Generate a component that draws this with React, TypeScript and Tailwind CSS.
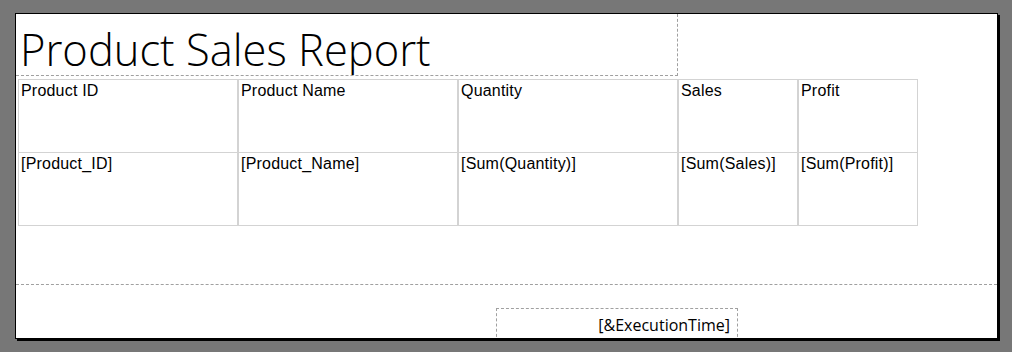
import React from "react";

const cols = [
  { w: "w-[220px]", h: "Product ID", d: "[Product_ID]" },
  { w: "w-[220px]", h: "Product Name", d: "[Product_Name]" },
  { w: "w-[220px]", h: "Quantity", d: "[Sum(Quantity)]" },
  { w: "w-[120px]", h: "Sales", d: "[Sum(Sales)]" },
  { w: "w-[120px]", h: "Profit", d: "[Sum(Profit)]" },
];

function Row({ field, first }: { field: "h" | "d"; first?: boolean }) {
  return (
    <div className={`flex ${first ? "" : "-mt-px"}`}>
      {cols.map((c) => (
        <div
          key={c.h}
          className={`${c.w} h-[74px] border border-[#d3d3d3] pl-[2px] pt-[2px] text-[16px] leading-[18px] tracking-[0.2px] text-black whitespace-nowrap`}
          style={{ fontFamily: '"Liberation Sans", Arial, sans-serif' }}
        >
          {c[field]}
        </div>
      ))}
    </div>
  );
}

export default function App() {
  return (
    <div className="w-[1012px] h-[352px] bg-[#777777] overflow-hidden pt-[13px] pl-[15px]">
      <div className="w-[983px] h-[326px] border border-black bg-white shadow-[2px_2px_0_0_#000] overflow-hidden flex flex-col">
        <div className="h-[270px] shrink-0 flex flex-col">
          <div
            className="w-[662px] h-[62px] border-r border-b border-dashed border-[#a0a0a0] pl-[4px] pt-[12px] text-[43.5px] leading-[48px] font-light text-black whitespace-nowrap overflow-hidden"
            style={{ fontFamily: '"Open Sans", sans-serif' }}
          >
            Product Sales Report
          </div>
          <div className="mt-[3px] ml-[2px]">
            <Row field="h" first />
            <Row field="d" />
          </div>
        </div>
        <div className="border-t border-dashed border-[#a0a0a0] flex-1">
          <div
            className="ml-[480px] mt-[23px] w-[242px] h-[60px] border border-dashed border-[#a0a0a0] text-right pr-[7px] pt-[6px] text-[16px] leading-[20px] text-black whitespace-nowrap"
            style={{ fontFamily: '"Open Sans", sans-serif' }}
          >
            [&amp;ExecutionTime]
          </div>
        </div>
      </div>
    </div>
  );
}
